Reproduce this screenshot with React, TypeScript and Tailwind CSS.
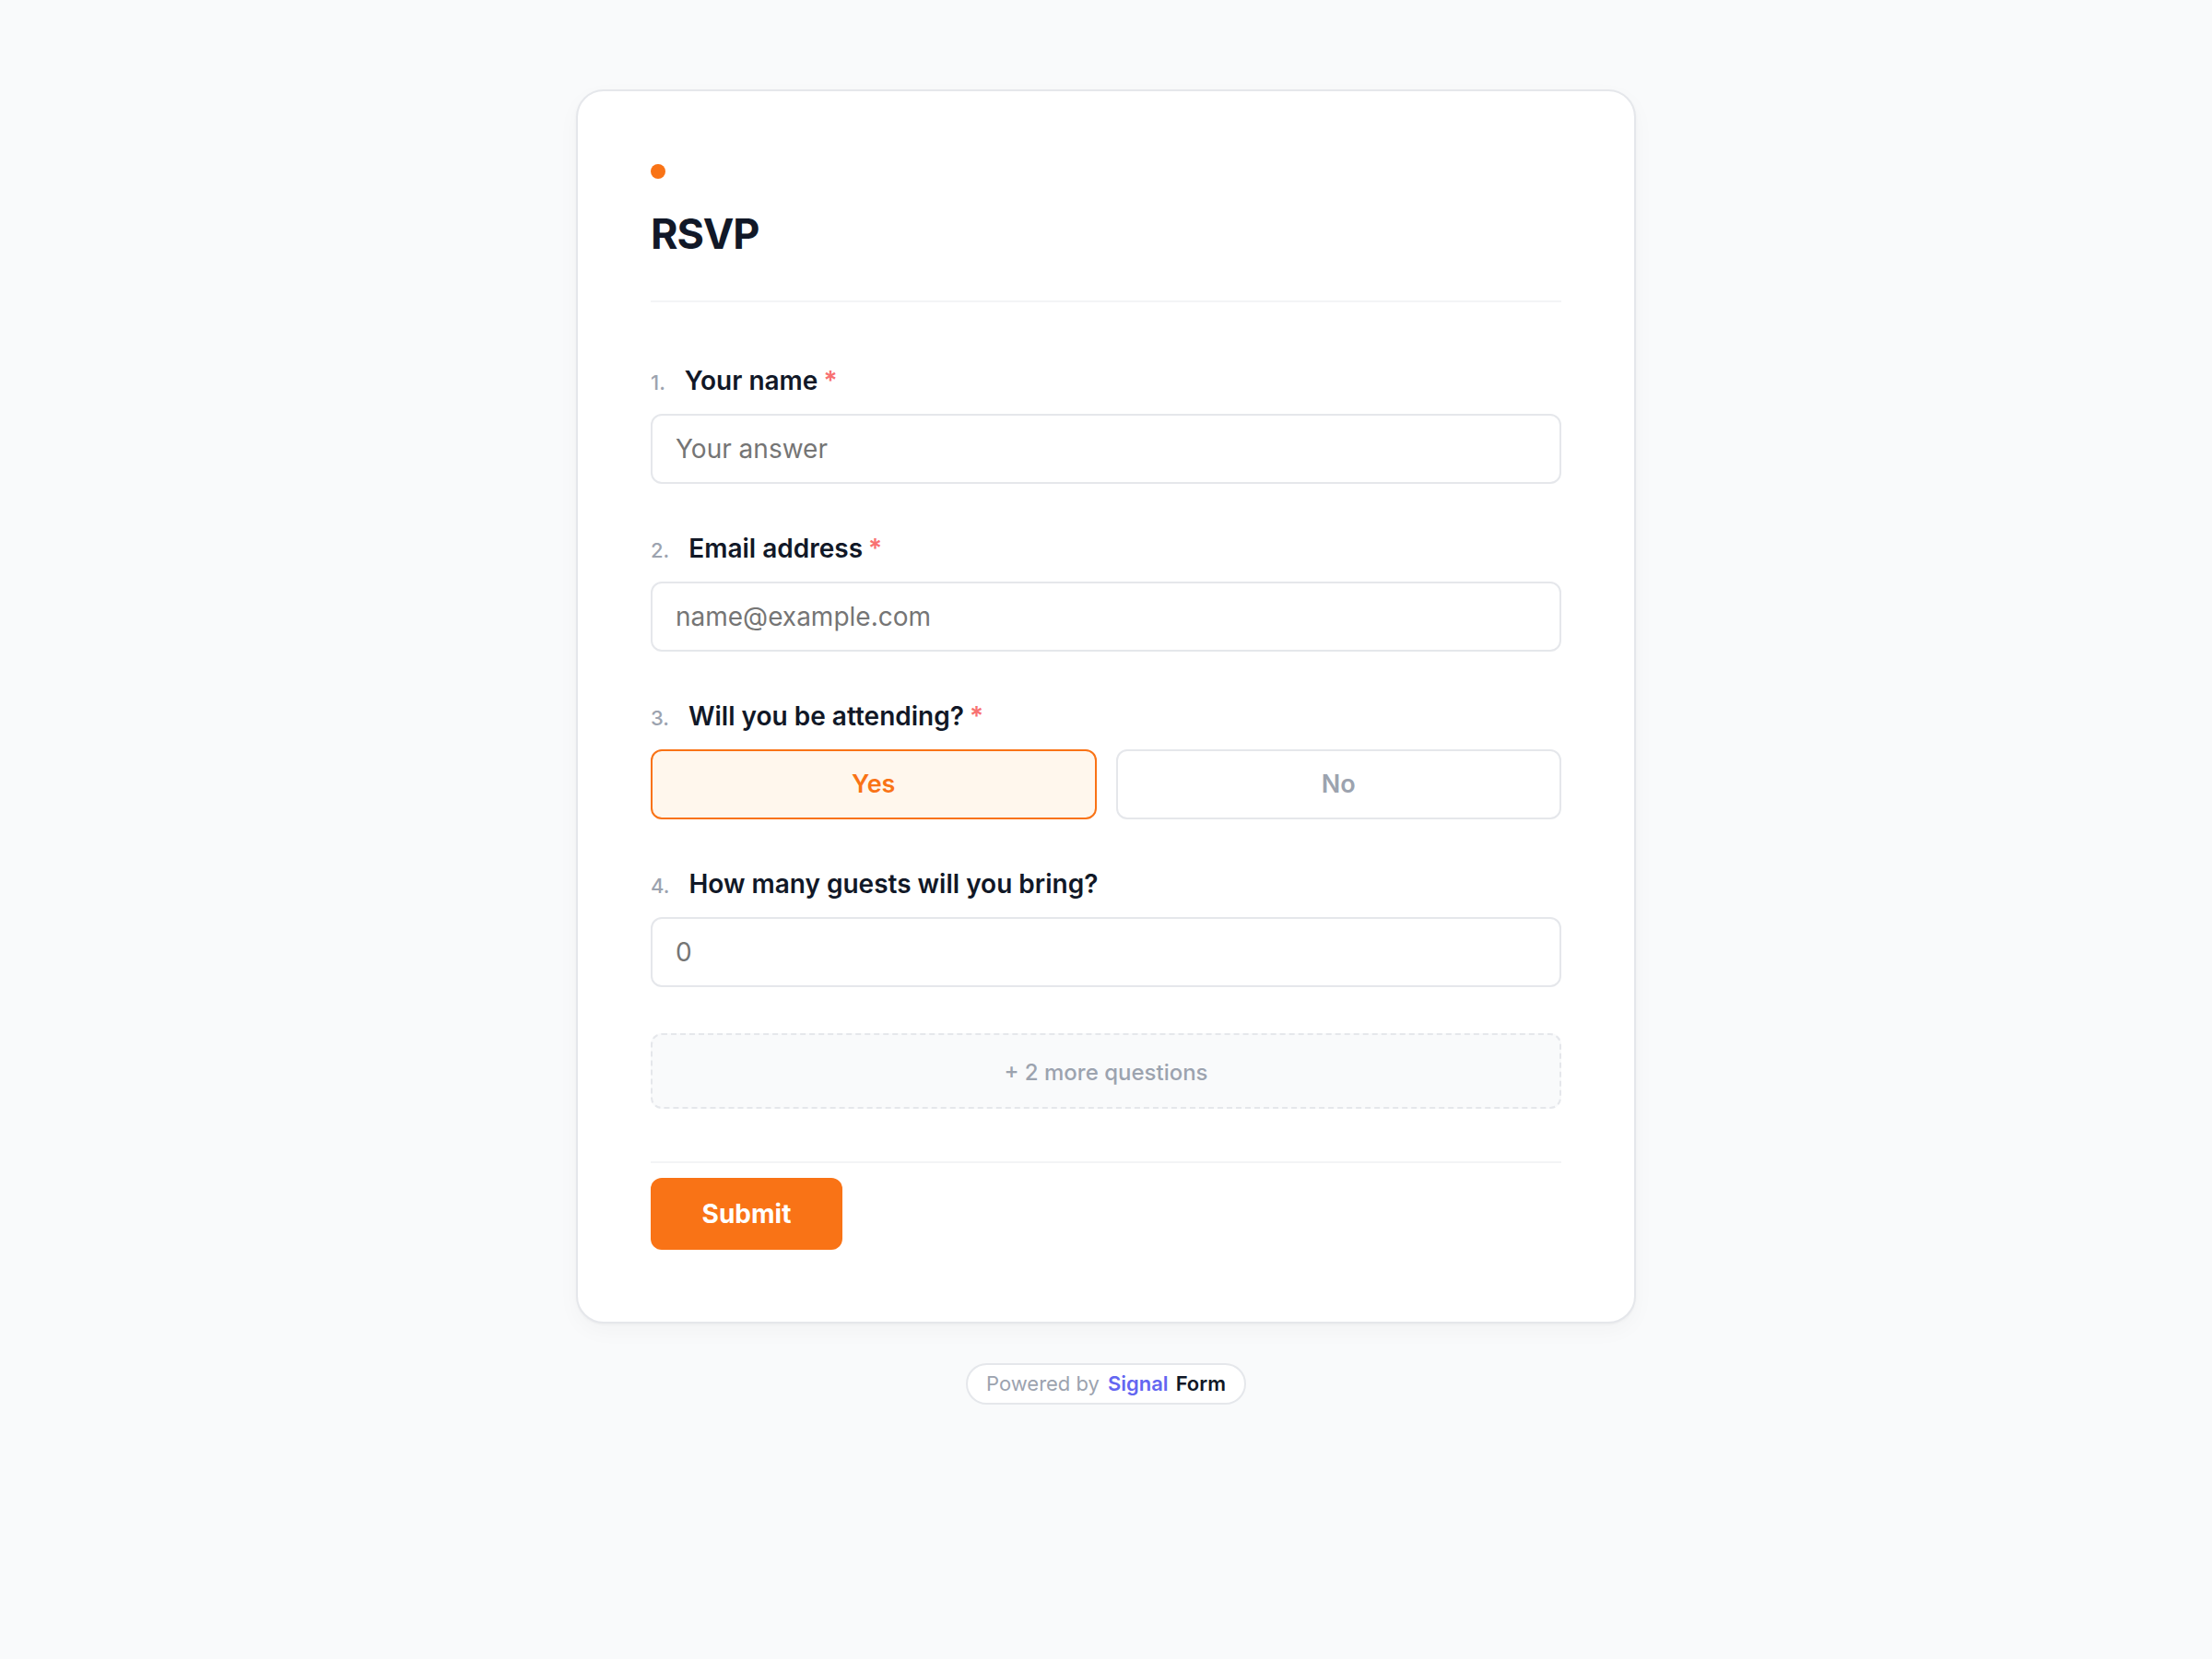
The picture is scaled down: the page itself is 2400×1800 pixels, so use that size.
import React from 'react';

type Question = {
  n: number;
  label: string;
  required?: boolean;
};

const QuestionLabel = ({ n, label, required }: Question) => (
  <div className="flex h-[40px] items-baseline leading-[40px]">
    <span className="mr-[21px] text-[22px] font-medium text-[#9ca3af]">{n}.</span>
    <span className="text-[28px] font-semibold text-[#111827]">{label}</span>
    {required && <span className="ml-[6px] text-[28px] font-semibold text-[#f87171]">*</span>}
  </div>
);

const TextField = ({ placeholder, type = 'text' }: { placeholder: string; type?: string }) => (
  <input
    type={type}
    placeholder={placeholder}
    className="mt-[16px] block h-[76px] w-full rounded-[12px] border-2 border-[#e5e7eb] bg-white px-[25px] text-[28px] text-[#111827] outline-none placeholder:text-[#757575]"
  />
);

const App = () => {
  return (
    <div className="min-h-screen bg-[#f9fafb] pt-[97px] pb-24 font-['Inter',sans-serif]">
      <div className="mx-auto w-[1150px] rounded-[30px] border-2 border-[#e5e7eb] bg-white px-[79px] pt-[79px] pb-[78px] shadow-[0_1px_3px_rgba(0,0,0,0.04),0_8px_24px_rgba(0,0,0,0.03)]">
        <div className="h-4 w-4 rounded-full bg-[#f97316]" />
        <h1 className="mt-[33px] text-[45px] leading-[54px] font-bold tracking-tight text-[#111827]">RSVP</h1>
        <div className="mt-[45px] h-[2px] bg-[#f3f4f6]" />

        <div className="mt-[65px] flex flex-col gap-[50px]">
          <div>
            <QuestionLabel n={1} label="Your name" required />
            <TextField placeholder="Your answer" />
          </div>
          <div>
            <QuestionLabel n={2} label="Email address" required />
            <TextField placeholder="name@example.com" type="email" />
          </div>
          <div>
            <QuestionLabel n={3} label="Will you be attending?" required />
            <div className="mt-[16px] grid grid-cols-2 gap-[21px]">
              <button className="h-[76px] rounded-[12px] border-2 border-[#f97316] bg-[#fff7ed] text-[27px] font-semibold text-[#f97316]">
                Yes
              </button>
              <button className="h-[76px] rounded-[12px] border-2 border-[#e5e7eb] bg-white text-[27px] font-semibold text-[#9ca3af]">
                No
              </button>
            </div>
          </div>
          <div>
            <QuestionLabel n={4} label="How many guests will you bring?" />
            <TextField placeholder="0" type="number" />
          </div>
          <div className="flex h-[82px] items-center justify-center rounded-[12px] border-2 border-dashed border-[#e5e7eb] bg-[#f9fafb] pt-[4px] text-[24px] font-medium text-[#9ca3af]">
            + 2 more questions
          </div>
        </div>

        <div className="mt-[57px] h-[2px] bg-[#f3f4f6]" />
        <button className="mt-[16px] h-[78px] w-[208px] rounded-[12px] bg-[#f97316] text-[28px] font-bold text-white">
          Submit
        </button>
      </div>

      <div className="mt-[43px] flex justify-center">
        <div className="flex h-[45px] items-center gap-[9px] rounded-full border-2 border-[#e5e7eb] bg-white px-[20px] text-[22px]">
          <span className="text-[#9ca3af]">Powered by</span>
          <span className="font-semibold text-[#6366f1]">Signal</span>
          <span className="-ml-[1px] font-semibold text-[#111827]">Form</span>
        </div>
      </div>
    </div>
  );
};

export default App;
